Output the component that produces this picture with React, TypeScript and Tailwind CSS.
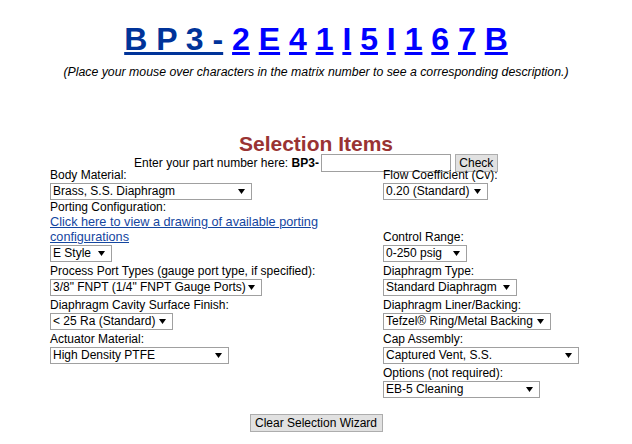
import React from "react";

function Arrow() {
  return (
    <svg width="7" height="5" viewBox="0 0 7 5" className="absolute right-[6px] top-[5px]">
      <polygon points="0,0 7,0 3.5,5" fill="#000" />
    </svg>
  );
}

function Sel({ w, text, mb = "mb-[2px]" }: { w: string; text: string; mb?: string }) {
  return (
    <div
      className={`relative h-[17px] border border-[#a0a0a0] bg-white pl-[2px] text-[12px] leading-[15px] text-black whitespace-nowrap ${mb} ${w}`}
    >
      {text}
      <Arrow />
    </div>
  );
}

function Field({ label, w, text, mb }: { label: string; w: string; text: string; mb?: string }) {
  return (
    <div>
      <div className="leading-[15px]">{label}</div>
      <Sel w={w} text={text} mb={mb} />
    </div>
  );
}

export default function App() {
  const chars = ["2", "E", "4", "1", "I", "5", "I", "1", "6", "7", "B"];
  return (
    <div className="w-[632px] h-[444px] bg-white text-black font-['Liberation_Sans',Arial,sans-serif]">
      <div className="pt-[21px] text-center text-[32px] leading-[37px] font-bold whitespace-nowrap">
        <a className="text-[#003399] underline">B P 3 -</a>{" "}
        {chars.map((c, i) => (
          <React.Fragment key={i}>
            <a className="text-[#0000ff] underline">{c}</a>
            {i < chars.length - 1 ? " " : ""}
          </React.Fragment>
        ))}
      </div>
      <div className="mt-[7px] text-center text-[12.3px] leading-[15px] italic">
        (Place your mouse over characters in the matrix number to see a corresponding description.)
      </div>
      <div className="mt-[52px] text-center text-[21px] leading-[24px] font-bold text-[#993333]">
        Selection Items
      </div>
      <div className="mt-[2px] h-[10px] flex items-center justify-center text-[12px] whitespace-nowrap">
        <span>
          Enter your part number here: <b>BP3-</b>
        </span>
        <div className="ml-[2px] w-[130px] h-[18px] shrink-0 border border-[#a0a0a0] bg-white" />
        <div className="ml-[4px] w-[43px] h-[18px] shrink-0 border border-[#adadad] bg-[#e1e1e1] flex items-center justify-center text-[12px]">
          Check
        </div>
      </div>
      <div className="ml-[50px] grid grid-cols-[333px_200px] items-end text-[12px]">
        <Field label="Body Material:" w="w-[202px]" text="Brass, S.S. Diaphragm" mb="mb-0" />
        <Field label="Flow Coefficient (Cv):" w="w-[105px]" text="0.20 (Standard)" mb="mb-0" />

        <div>
          <div className="leading-[15px]">Porting Configuration:</div>
          <a className="block w-[290px] text-[12.7px] leading-[15px] text-[#14469f] underline">
            Click here to view a drawing of available porting configurations
          </a>
          <Sel w="w-[62px]" text="E Style" />
        </div>
        <Field label="Control Range:" w="w-[84px]" text="0-250 psig" />

        <Field
          label="Process Port Types (gauge port type, if specified):"
          w="w-[212px]"
          text={'3/8" FNPT (1/4" FNPT Gauge Ports)'}
        />
        <Field label="Diaphragm Type:" w="w-[134px]" text="Standard Diaphragm" />

        <Field label="Diaphragm Cavity Surface Finish:" w="w-[123px]" text="< 25 Ra (Standard)" />
        <Field label="Diaphragm Liner/Backing:" w="w-[168px]" text="Tefzel® Ring/Metal Backing" />

        <Field label="Actuator Material:" w="w-[179px]" text="High Density PTFE" />
        <Field label="Cap Assembly:" w="w-[196px]" text="Captured Vent, S.S." />

        <div />
        <Field label="Options (not required):" w="w-[157px]" text="EB-5 Cleaning" />
      </div>
      <div className="mt-[14px] flex justify-center">
        <div className="w-[133px] h-[18px] border border-[#adadad] bg-[#e1e1e1] flex items-center justify-center text-[12px] whitespace-nowrap">
          Clear Selection Wizard
        </div>
      </div>
    </div>
  );
}
